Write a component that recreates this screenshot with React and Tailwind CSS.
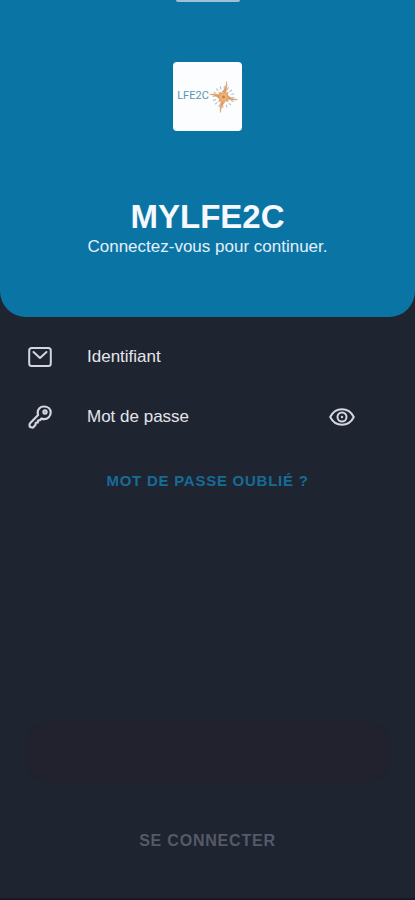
import { useState } from 'react'

function MailIcon() {
  return (
    <svg width="24" height="20" viewBox="0 0 24 20" fill="none" stroke="currentColor" strokeWidth="2" strokeLinejoin="round" strokeLinecap="round">
      <rect x="1.200" y="1" width="21.600" height="18" rx="2.500" />
      <path d="M5.500 5l6.500 6 6.500-6" />
    </svg>
  )
}

function KeyIcon() {
  return (
    <svg width="24" height="24" viewBox="0 0 24 24" fill="none" stroke="currentColor" strokeWidth="2.200" strokeLinejoin="round" strokeLinecap="round">
      <path d="M15.800 1.500c4 0 6.900 2.500 6.900 6 0 3.700-2.900 6.600-6.700 6.600-1 0-1.800-.2-2.600-.5l-1.500 1.600-1.800.3-.3 2-2 .3-.3 2-2 2.300c-.4.400-.8.500-1.300.4l-1.700-.3c-.6-.1-.9-.5-.9-1.100v-1.700c0-.5.200-.8.500-1.100l8-8.300c-.3-.8-.4-1.600-.4-2.400 0-3.500 2.600-6.100 6.100-6.100z" />
      <circle cx="17" cy="7" r="1.600" />
    </svg>
  )
}

function EyeIcon() {
  return (
    <svg width="26" height="18" viewBox="0 0 26 18" fill="none" stroke="currentColor" strokeWidth="2" strokeLinejoin="round">
      <path d="M1.200 9C3.600 4.200 8 1.200 13 1.200S22.400 4.200 24.800 9c-2.400 4.800-6.800 7.800-11.800 7.800S3.600 13.800 1.200 9z" />
      <circle cx="13" cy="9" r="4.500" />
      <circle cx="13" cy="9" r="1.200" fill="currentColor" stroke="none" />
    </svg>
  )
}

// Compass rose of the school logo
function CompassRose() {
  return (
    <svg width="29" height="32" viewBox="0 0 29 32" fill="none">
      <circle cx="14.500" cy="16" r="9.500" stroke="#a9bfcd" strokeWidth="3" strokeDasharray="1 2.730" />
      <g fill="#e09a5c" stroke="#e09a5c" strokeWidth=".5" strokeLinejoin="round">
        <path d="M17.500 .5c1 3.500 0 7.500-.5 11l-4 -.5c3-3 4.500-6.500 4.500-10.500z" />
        <path d="M28.500 18.500c-3.500 1.200-7 .2-10.500-.5l.5-4c3 3 6 4.500 10 4.500z" />
        <path d="M11.500 31.500c-1-3.500 0-7.500.5-11l4 .5c-3 3-4.500 6.500-4.500 10.500z" />
        <path d="M.5 13.500c3.500-1.200 7-.2 10.500.5l-.5 4c-3-3-6-4.500-10-4.500z" />
      </g>
      <path d="M9.500 11l5 1 5-1-1 5 1 5-5-1-5 1 1-5z" fill="#e5a66b" />
      <circle cx="14.500" cy="16" r="4.700" fill="#e5a66b" />
      <circle cx="14.500" cy="16" r="2.800" stroke="#efbf8e" strokeWidth="1" />
      <circle cx="14.500" cy="16" r="1.300" fill="#c77d3d" />
    </svg>
  )
}

function Field({ id, label, type = 'text', value, onChange, icon, children }) {
  return (
    <div className="flex h-[60px] items-center pl-7 pr-[60px]">
      <label htmlFor={id} aria-label={label} className="flex w-[59px] shrink-0 text-[#d3d5e0]">
        {icon}
      </label>
      <input
        id={id}
        type={type}
        value={value}
        onChange={e => onChange(e.target.value)}
        placeholder={label}
        className="min-w-0 flex-1 bg-transparent text-[17px] leading-6 text-[#e4e5eb] placeholder:text-[#e4e5eb] focus:outline-none"
      />
      {children}
    </div>
  )
}

export default function App() {
  const [login, setLogin] = useState('')
  const [password, setPassword] = useState('')
  const [visible, setVisible] = useState(false)

  return (
    <div className="flex min-h-screen flex-col border-b-2 border-[#1b1823] bg-[#1f2431] font-['Liberation_Sans',Arial,sans-serif]">
      <header className="flex flex-col items-center rounded-b-[26px] bg-[#0a75a5] pb-[58px]">
        <div className="h-[2px] w-16 rounded-b-sm bg-[#a3bfd6]" />
        <div className="mt-[60px] flex h-[69px] w-[69px] items-center justify-center rounded-[4px] bg-[#fcfdfe]">
          <span className="font-['Roboto',sans-serif] text-[11px] text-[#5b95ad]">LFE2C</span>
          <CompassRose />
        </div>
        <h1 className="mt-[68px] text-[33px] leading-9 font-bold text-[#f5f8fd]">MYLFE2C</h1>
        <p className="text-[17px] leading-6 text-[#e3effa]">Connectez-vous pour continuer.</p>
      </header>

      <form className="flex flex-1 flex-col pt-[10px]" onSubmit={e => e.preventDefault()}>
        <Field id="login" label="Identifiant" value={login} onChange={setLogin} icon={<MailIcon />} />
        <Field
          id="password"
          label="Mot de passe"
          type={visible ? 'text' : 'password'}
          value={password}
          onChange={setPassword}
          icon={<KeyIcon />}
        >
          <button type="button" aria-label="Afficher le mot de passe" onClick={() => setVisible(v => !v)} className="shrink-0 text-[#d3d5e0]">
            <EyeIcon />
          </button>
        </Field>

        <a href="#oubli" className="mt-[22px] self-center text-[15px] leading-6 font-bold tracking-wider text-[#176b97]">
          MOT DE PASSE OUBLIÉ ?
        </a>

        <div className="mx-6 mt-auto h-[62px] rounded-3xl bg-[#21222d]" />
        <button type="submit" className="mt-[34px] mb-[33px] h-12 text-base font-bold tracking-wider text-[#555a69]">
          SE CONNECTER
        </button>
      </form>
    </div>
  )
}
